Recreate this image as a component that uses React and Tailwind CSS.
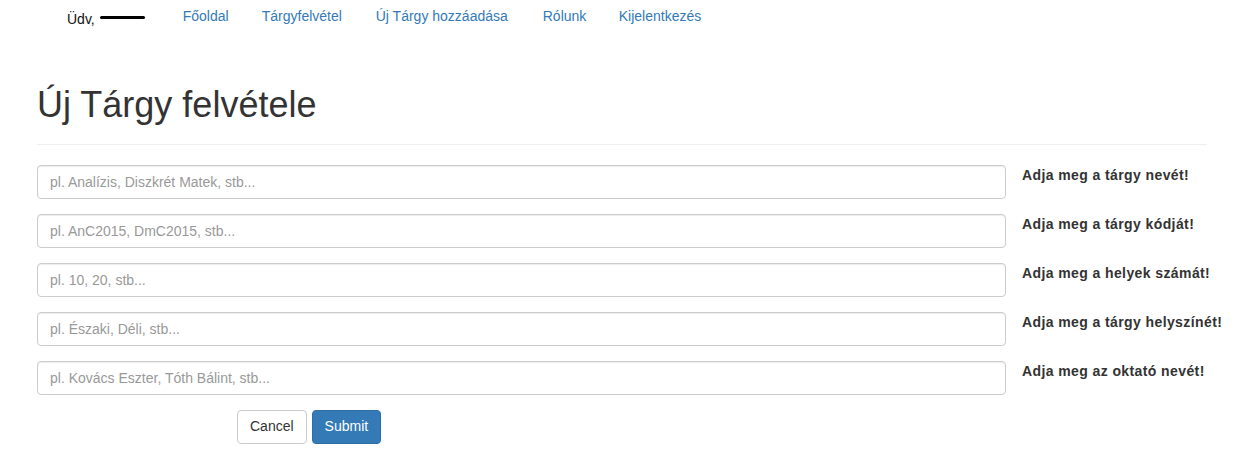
const fields = [
  { ph: "pl. Analízis, Diszkrét Matek, stb...", label: "Adja meg a tárgy nevét!" },
  { ph: "pl. AnC2015, DmC2015, stb...", label: "Adja meg a tárgy kódját!" },
  { ph: "pl. 10, 20, stb...", label: "Adja meg a helyek számát!" },
  { ph: "pl. Északi, Déli, stb...", label: "Adja meg a tárgy helyszínét!" },
  { ph: "pl. Kovács Eszter, Tóth Bálint, stb...", label: "Adja meg az oktató nevét!" },
];

const links = [
  { t: "Főoldal", w: "w-[79px]" },
  { t: "Tárgyfelvétel", w: "w-[114px]" },
  { t: "Új Tárgy hozzáadása", w: "w-[167px]" },
  { t: "Rólunk", w: "w-[76px]" },
  { t: "Kijelentkezés", w: "" },
];

export default function App() {
  return (
    <div
      className="min-h-screen bg-white text-[#333] text-[14px] overflow-hidden"
      style={{ fontFamily: "'Liberation Sans', Arial, sans-serif" }}
    >
      {/* Nav */}
      <nav className="flex items-center h-[33px] pl-[67px]">
        <div className="flex items-center pt-[6px]">
          <span className="text-[#111]">Üdv,</span>
          <span className="ml-[5px] w-[45px] h-[3px] bg-black rounded-full -mt-[4px]" />
        </div>
        <ul className="flex items-center ml-[38px]">
          {links.map((l) => (
            <li key={l.t} className={l.w}>
              <a href="#" className="text-[#337ab7]">
                {l.t}
              </a>
            </li>
          ))}
        </ul>
      </nav>

      <div className="px-[37px]">
        {/* Header */}
        <div className="w-[1170px] border-b border-[#eee] pt-[52px] pb-[19px]">
          <h1 className="text-[36px] leading-[1.1] font-normal text-[#333]">Új Tárgy felvétele</h1>
        </div>

        {/* Form */}
        <form className="pt-[20px] flex flex-col gap-[15px]">
          {fields.map((f) => (
            <div key={f.label} className="flex items-start">
              <input
                type="text"
                placeholder={f.ph}
                className="shrink-0 w-[969px] h-[34px] px-[12px] border border-[#ccc] rounded-[4px] text-[14px] text-[#555] placeholder:text-[#999] shadow-[inset_0_1px_1px_rgba(0,0,0,0.075)] outline-none"
              />
              <span className="ml-[16px] whitespace-nowrap text-[14px] tracking-[0.4px] font-bold text-[#333]">
                {f.label}
              </span>
            </div>
          ))}
          <div className="flex gap-[5px] pl-[200px]">
            <button
              type="button"
              className="h-[34px] px-[12px] bg-white border border-[#ccc] rounded-[4px] text-[14px] text-[#333]"
            >
              Cancel
            </button>
            <button
              type="submit"
              className="h-[34px] px-[12px] bg-[#337ab7] border border-[#2e6da4] rounded-[4px] text-[14px] text-white"
            >
              Submit
            </button>
          </div>
        </form>
      </div>
    </div>
  );
}
